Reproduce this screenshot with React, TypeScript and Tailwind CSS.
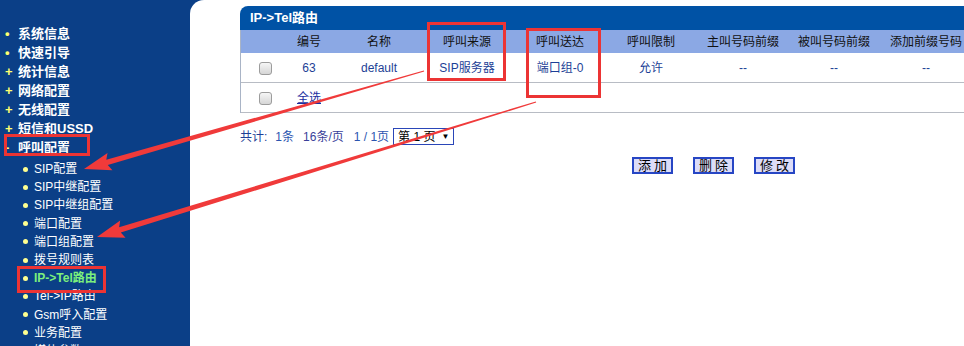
import React from "react";

const TOP = [
  { t: "系统信息", b: "•" },
  { t: "快速引导", b: "•" },
  { t: "统计信息", b: "+" },
  { t: "网络配置", b: "+" },
  { t: "无线配置", b: "+" },
  { t: "短信和USSD", b: "+" },
  { t: "呼叫配置", b: "-" },
];

const SUB = [
  "SIP配置",
  "SIP中继配置",
  "SIP中继组配置",
  "端口配置",
  "端口组配置",
  "拨号规则表",
  "IP->Tel路由",
  "Tel->IP路由",
  "Gsm呼入配置",
  "业务配置",
  "媒体参数",
];

const COLS = ["", "编号", "名称", "呼叫来源", "呼叫送达", "呼叫限制", "主叫号码前缀", "被叫号码前缀", "添加前缀号码"];
const ROW = ["63", "default", "SIP服务器", "端口组-0", "允许", "--", "--", "--"];

// tapered annotation arrow: thin tail, thick near the head
function arrow(x1: number, y1: number, x2: number, y2: number) {
  const L = Math.hypot(x2 - x1, y2 - y1);
  const ux = (x2 - x1) / L, uy = (y2 - y1) / L;
  const nx = -uy, ny = ux;
  const hl = 24, hw = 9, w0 = 0.6, w1 = 2.8;
  const bx = x2 - ux * hl, by = y2 - uy * hl;
  const p = (x: number, y: number) => `${x.toFixed(1)},${y.toFixed(1)}`;
  return [
    p(x1 + nx * w0, y1 + ny * w0),
    p(bx + nx * w1, by + ny * w1),
    p(bx + nx * hw + ux * -3, by + ny * hw + uy * -3),
    p(x2, y2),
    p(bx - nx * hw + ux * -3, by - ny * hw + uy * -3),
    p(bx - nx * w1, by - ny * w1),
    p(x1 - nx * w0, y1 - ny * w0),
  ].join(" ");
}

function Check() {
  return (
    <span className="inline-block w-[13px] h-[13px] rounded-[3px] border border-[#9c9c9c] bg-gradient-to-b from-[#f6f6f6] to-[#d6d6d6]" />
  );
}

export default function App() {
  return (
    <div className="relative w-[964px] h-[346px] overflow-hidden flex bg-[#0b3f87] font-['Liberation_Sans','Noto_Sans_CJK_SC',sans-serif]">
      {/* sidebar */}
      <div className="w-[190px] shrink-0 pt-[24px]">
        {TOP.map((it) => (
          <div key={it.t} className="h-[19px] flex items-center">
            <span className="w-[18px] pl-[5px] text-[#ffff70] text-[13px] font-bold leading-none">{it.b}</span>
            <span className="text-white text-[13px] font-bold">{it.t}</span>
          </div>
        ))}
        <div className="mt-[3px]">
          {SUB.map((s) => (
            <div key={s} className="h-[18.2px] flex items-center">
              <span className="w-[8px] h-[5px] ml-[23px] mr-[3px] flex items-center">
                <span className="w-[5px] h-[5px] rounded-full bg-[#ffff90]" />
              </span>
              <span
                className={
                  s === "IP->Tel路由"
                    ? "text-[12px] font-bold text-[#7cf07c]"
                    : "text-[12px] text-white"
                }
              >
                {s}
              </span>
            </div>
          ))}
        </div>
      </div>

      {/* content */}
      <div className="flex-1 bg-white rounded-tl-[14px] pl-[50px] pt-[6px]">
        <div className="w-[742px]">
          <div className="h-[24px] bg-[#0052a5] rounded-tl-[8px] flex items-center pl-[10px] text-white text-[13px] font-bold">
            IP-&gt;Tel路由
          </div>
          <div className="border-l border-[#a9b4c6]">
            <div className="grid grid-cols-[48px_40px_100px_76px_110px_72px_112px_70px_114px] h-[23px] bg-[#8ba8e4] items-center text-[12px] text-[#111] text-center whitespace-nowrap">
              {COLS.map((c, i) => (
                <div key={i} className="flex justify-center">{c}</div>
              ))}
            </div>
            <div className="grid grid-cols-[48px_40px_100px_76px_110px_72px_112px_70px_114px] h-[30px] items-center text-[12px] text-[#1d3f96] text-center whitespace-nowrap border-b border-[#b8bcc4]">
              <div className="flex justify-center pt-[2px]"><Check /></div>
              {ROW.map((c, i) => (
                <div key={i} className="flex justify-center">{c}</div>
              ))}
            </div>
            <div className="grid grid-cols-[48px_40px_100px_76px_110px_72px_112px_70px_114px] h-[30px] items-center text-[12px] text-center whitespace-nowrap border-b border-[#b8bcc4]">
              <div className="flex justify-center pt-[2px]"><Check /></div>
              <div className="flex justify-center text-[#1a2fa0] underline">全选</div>
            </div>
          </div>

          <div className="mt-[15px] h-[17px] flex items-center text-[12px] text-[#1d3f96] whitespace-nowrap">
            <span>共计:</span>
            <span className="ml-[8px] text-[#2c55b0]">1条</span>
            <span className="ml-[9px] text-[#3a3f9a]">16条/页</span>
            <span className="ml-[10px] text-[#2c55b0]">1 / 1页</span>
            <span className="ml-[4px] w-[61px] h-[17px] border border-[#2a46b8] flex items-center pl-[4px] text-black text-[12px]">
              第 1 页
              <span className="ml-[6px] text-[8px]">▼</span>
            </span>
          </div>

          <div className="mt-[12px] flex gap-[20px] pl-[392px]">
            {["添加", "删除", "修改"].map((b) => (
              <button
                key={b}
                className="w-[41px] h-[17px] bg-[#dcdcf8] border-2 border-[#2746c4] text-[13px] leading-none text-black tracking-[3px] pl-[3px] flex items-center justify-center"
              >
                {b}
              </button>
            ))}
          </div>
        </div>
      </div>

      {/* annotation boxes */}
      <div className="absolute left-[427px] top-[22px] w-[79px] h-[59px] border-[3px] border-[#ec3434]" />
      <div className="absolute left-[526px] top-[28px] w-[75px] h-[70px] border-[3px] border-[#ec3434]" />
      <div className="absolute left-[4px] top-[134px] w-[86px] h-[22px] border-[3px] border-[#ec3434]" />
      <div className="absolute left-[17px] top-[266px] w-[89px] h-[27px] border-[3px] border-[#ec3434]" />

      {/* annotation arrows */}
      <svg className="absolute left-0 top-0 pointer-events-none" width="964" height="346" viewBox="0 0 964 346">
        <polygon points={arrow(424, 71, 84, 169)} fill="#f03a3a" />
        <polygon points={arrow(536, 102, 97, 237)} fill="#f03a3a" />
      </svg>
    </div>
  );
}
